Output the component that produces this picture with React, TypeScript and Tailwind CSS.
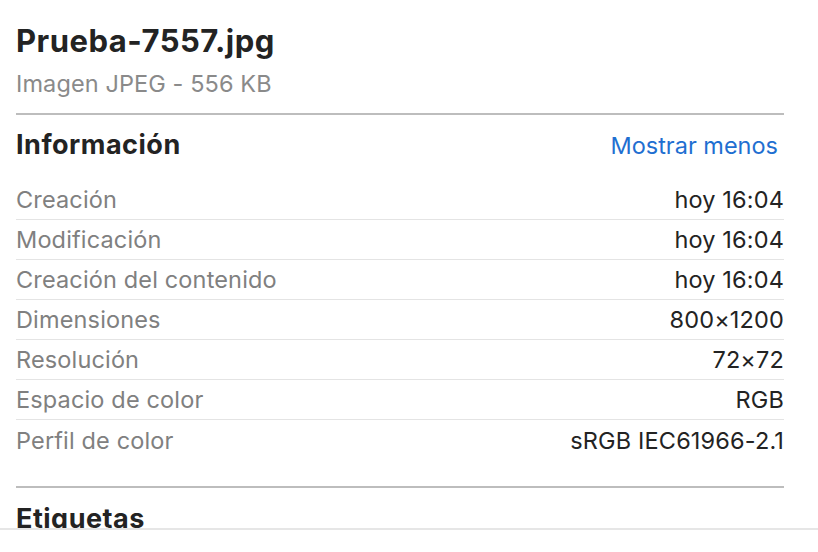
const rows: [string, string][] = [
  ['Creación', 'hoy 16:04'],
  ['Modificación', 'hoy 16:04'],
  ['Creación del contenido', 'hoy 16:04'],
  ['Dimensiones', '800×1200'],
  ['Resolución', '72×72'],
  ['Espacio de color', 'RGB'],
  ['Perfil de color', 'sRGB IEC61966-2.1'],
];

const App = () => {
  return (
    <div
      className="w-[818px] h-[552px] bg-white flex flex-col overflow-hidden"
      style={{ fontFamily: 'Inter, "Noto Sans", sans-serif' }}
    >
      <div className="h-[528px] overflow-hidden pl-4 pr-[34px]">
        <div className="pt-[21px]">
          <h1 className="text-[31px] leading-[40px] tracking-[0.5px] font-bold text-[#232323]">Prueba-7557.jpg</h1>
          <p className="mt-[8px] text-[23.5px] leading-[30px] tracking-[0.1px] text-[#8a8a8a]">Imagen JPEG - 556 KB</p>
        </div>

        <div className="mt-[14px] border-t-2 border-[#bdbdbd]" />

        <div className="flex items-baseline justify-between pt-[12px] pr-[6px]">
          <h2 className="text-[27px] leading-[36px] tracking-[0.5px] font-bold text-[#232323]">Información</h2>
          <button className="text-[23.5px] leading-[36px] text-[#1f6fd1]">Mostrar menos</button>
        </div>

        <div className="mt-[16px]">
          {rows.map(([label, value], i) => (
            <div
              key={label}
              className={`h-10 flex items-center justify-between text-[23.5px] leading-[39px] tracking-[0.15px] ${
                i < rows.length - 1 ? 'border-b border-[#e4e4e4]' : ''
              }`}
            >
              <span className="text-[#808080]">{label}</span>
              <span className="text-[#232323]">{value}</span>
            </div>
          ))}
        </div>

        <div className="mt-[26px] border-t-2 border-[#bdbdbd]" />

        <h2 className="pt-[13px] text-[27px] leading-[36px] tracking-[0.5px] font-bold text-[#232323]">Etiquetas</h2>
      </div>
      <div className="border-t-2 border-[#e6e6e6] flex-1" />
    </div>
  );
};

export default App;
